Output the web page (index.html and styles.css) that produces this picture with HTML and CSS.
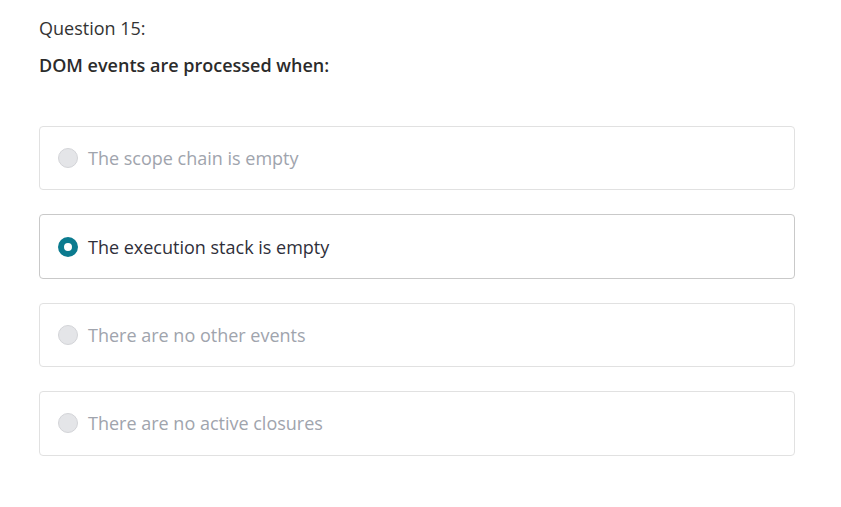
FILE: index.html
```html
<!DOCTYPE html>
<html>
<head>
<meta charset="utf-8">
<link rel="stylesheet" href="styles.css">
</head>
<body>
<div class="quiz">
  <div class="q-number">Question 15:</div>
  <div class="q-text">DOM events are processed when:</div>
  <div class="options">
    <label class="option"><span class="radio"></span><span class="label">The scope chain is empty</span></label>
    <label class="option selected"><span class="radio"></span><span class="label">The execution stack is empty</span></label>
    <label class="option"><span class="radio"></span><span class="label">There are no other events</span></label>
    <label class="option"><span class="radio"></span><span class="label">There are no active closures</span></label>
  </div>
</div>
</body>
</html>
```

FILE: styles.css
```css
html, body {
  margin: 0;
  padding: 0;
  background: #fff;
}
body {
  font-family: "Open Sans", "Noto Sans", sans-serif;
  color: #2b2b2b;
}
.quiz {
  padding: 16px 46px 0 39px;
}
.q-number {
  font-size: 18px;
  line-height: 24px;
  color: #333;
}
.q-text {
  margin-top: 13px;
  font-size: 18px;
  line-height: 24px;
  font-weight: 600;
  color: #2b2b2b;
}
.options {
  margin-top: 49px;
  display: flex;
  flex-direction: column;
  gap: 24px;
}
.option {
  display: flex;
  align-items: center;
  height: 64.4px;
  box-sizing: border-box;
  border: 1px solid #e1e1e1;
  border-radius: 4px;
  padding-left: 18px;
}
.option.selected {
  border-color: #c9c9c9;
}
.radio {
  width: 20px;
  height: 20px;
  box-sizing: border-box;
  border-radius: 50%;
  background: #e4e5e8;
  border: 1px solid #d3d4d8;
  flex: none;
}
.option.selected .radio {
  background: #fff;
  border: 6px solid #0b7b8f;
}
.label {
  margin-left: 10px;
  font-size: 18px;
  color: #a0a4ad;
}
.option.selected .label {
  color: #2f2f3a;
}
```
